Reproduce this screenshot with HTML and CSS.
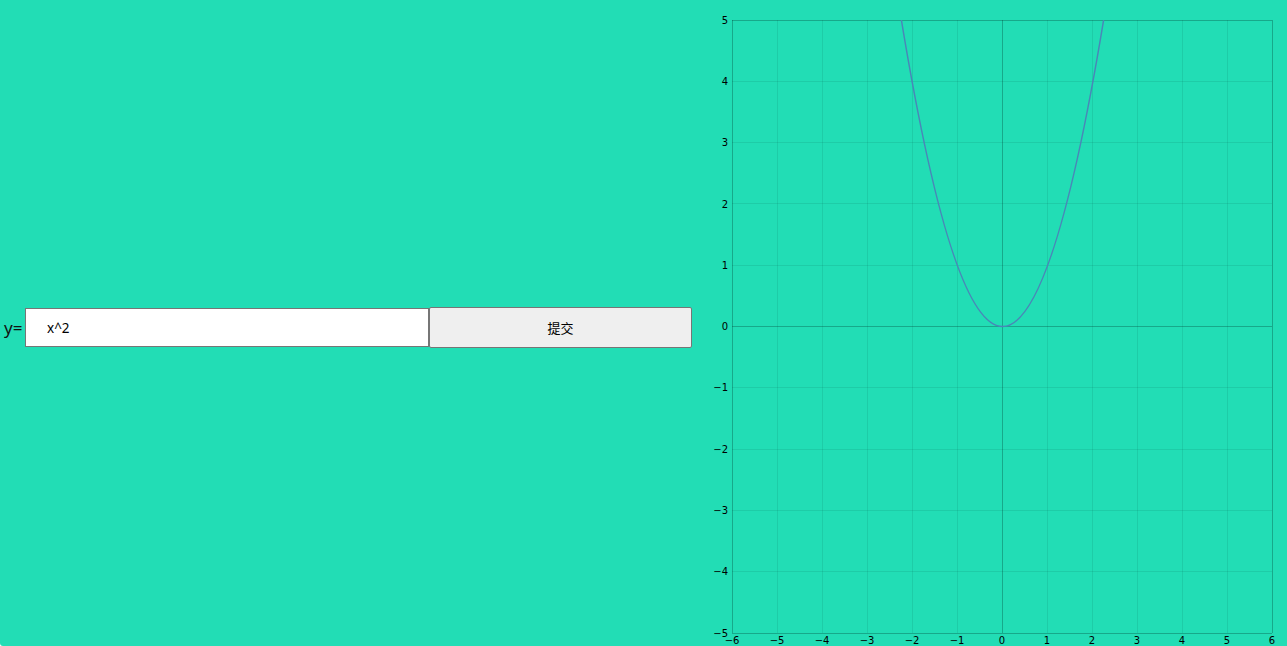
FILE: index.html
```html
<!DOCTYPE html>
<html lang="zh">
<head>
<meta charset="utf-8">
<title>函数绘图</title>
<link rel="stylesheet" href="styles.css">
</head>
<body>
<div class="app">
  <div class="left">
    <div class="row">
      <label class="label" for="fn">y=</label>
      <input class="input" id="fn" type="text" value="x^2">
      <button class="btn" type="button">提交</button>
    </div>
  </div>
  <div class="right">
    <svg class="plot" width="585" height="646" viewBox="0 0 585 646" xmlns="http://www.w3.org/2000/svg">
      <g class="grid">
        <line x1="75.5" y1="20" x2="75.5" y2="633"/>
        <line x1="120.5" y1="20" x2="120.5" y2="633"/>
        <line x1="165.5" y1="20" x2="165.5" y2="633"/>
        <line x1="210.5" y1="20" x2="210.5" y2="633"/>
        <line x1="255.5" y1="20" x2="255.5" y2="633"/>
        <line x1="345.5" y1="20" x2="345.5" y2="633"/>
        <line x1="390.5" y1="20" x2="390.5" y2="633"/>
        <line x1="435.5" y1="20" x2="435.5" y2="633"/>
        <line x1="480.5" y1="20" x2="480.5" y2="633"/>
        <line x1="525.5" y1="20" x2="525.5" y2="633"/>
        <line x1="30" y1="81.5" x2="570" y2="81.5"/>
        <line x1="30" y1="142.5" x2="570" y2="142.5"/>
        <line x1="30" y1="203.5" x2="570" y2="203.5"/>
        <line x1="30" y1="265.5" x2="570" y2="265.5"/>
        <line x1="30" y1="387.5" x2="570" y2="387.5"/>
        <line x1="30" y1="449.5" x2="570" y2="449.5"/>
        <line x1="30" y1="510.5" x2="570" y2="510.5"/>
        <line x1="30" y1="571.5" x2="570" y2="571.5"/>
      </g>
      <g class="axes">
        <line x1="300.5" y1="20" x2="300.5" y2="633"/>
        <line x1="30" y1="326.5" x2="570" y2="326.5"/>
        <line x1="30.5" y1="20" x2="30.5" y2="633"/>
        <line x1="30" y1="633.5" x2="570" y2="633.5"/>
        <line x1="30" y1="20.5" x2="570" y2="20.5"/>
        <line x1="570.5" y1="20" x2="570.5" y2="633"/>
      </g>
      <path class="curve" d="M199.38 20 Q300.5 633 401.62 20"/>
      <g class="ylab">
        <text x="26" y="24">5</text>
        <text x="26" y="85">4</text>
        <text x="26" y="146">3</text>
        <text x="26" y="208">2</text>
        <text x="26" y="269">1</text>
        <text x="26" y="330">0</text>
        <text x="26" y="391">−1</text>
        <text x="26" y="453">−2</text>
        <text x="26" y="514">−3</text>
        <text x="26" y="575">−4</text>
        <text x="26" y="637">−5</text>
      </g>
      <g class="xlab">
        <text x="30" y="644">−6</text>
        <text x="75" y="644">−5</text>
        <text x="120" y="644">−4</text>
        <text x="165" y="644">−3</text>
        <text x="210" y="644">−2</text>
        <text x="255" y="644">−1</text>
        <text x="300" y="644">0</text>
        <text x="345" y="644">1</text>
        <text x="390" y="644">2</text>
        <text x="435" y="644">3</text>
        <text x="480" y="644">4</text>
        <text x="525" y="644">5</text>
        <text x="570" y="644">6</text>
      </g>
    </svg>
  </div>
</div>
</body>
</html>
```
FILE: styles.css
```css
html, body {
  margin: 0;
  padding: 0;
  background: #ffffff;
}
body {
  font-family: "Noto Sans", "Noto Sans CJK SC", sans-serif;
}
.app {
  display: flex;
  width: 1287px;
  height: 646px;
  background: #22ddb5;
  border-bottom-left-radius: 3px;
  overflow: hidden;
}
.left {
  width: 702px;
  flex: none;
  padding-top: 307px;
  box-sizing: border-box;
}
.row {
  display: flex;
  align-items: center;
  padding-left: 4px;
}
.label {
  font-size: 17px;
  color: #111;
  width: 21px;
  line-height: 20px;
}
.input {
  width: 404px;
  height: 39px;
  box-sizing: border-box;
  border: 1px solid #767676;
  padding: 0 0 0 21px;
  margin: 0;
  font-family: "Noto Sans", "Noto Sans CJK SC", sans-serif;
  font-size: 13.5px;
  color: #000;
  background: #fff;
  outline: none;
}
.btn {
  width: 263px;
  height: 41px;
  box-sizing: border-box;
  border: 1px solid #767676;
  border-radius: 2px;
  background: #efefef;
  margin: 0;
  padding: 0;
  font-family: "Noto Sans CJK SC", sans-serif;
  font-size: 13px;
  color: #000;
}
.right {
  flex: none;
  width: 585px;
}
.plot {
  display: block;
}
.grid line {
  stroke: rgba(0, 60, 50, 0.1);
  stroke-width: 1;
}
.axes line {
  stroke: rgba(0, 50, 40, 0.3);
  stroke-width: 1;
}
.curve {
  fill: none;
  stroke: #4a86b8;
  stroke-width: 1.5;
}
.ylab text {
  font-family: "DejaVu Sans", sans-serif;
  font-size: 10px;
  fill: #000;
  text-anchor: end;
}
.xlab text {
  font-family: "DejaVu Sans", sans-serif;
  font-size: 10px;
  fill: #000;
  text-anchor: middle;
}
```
